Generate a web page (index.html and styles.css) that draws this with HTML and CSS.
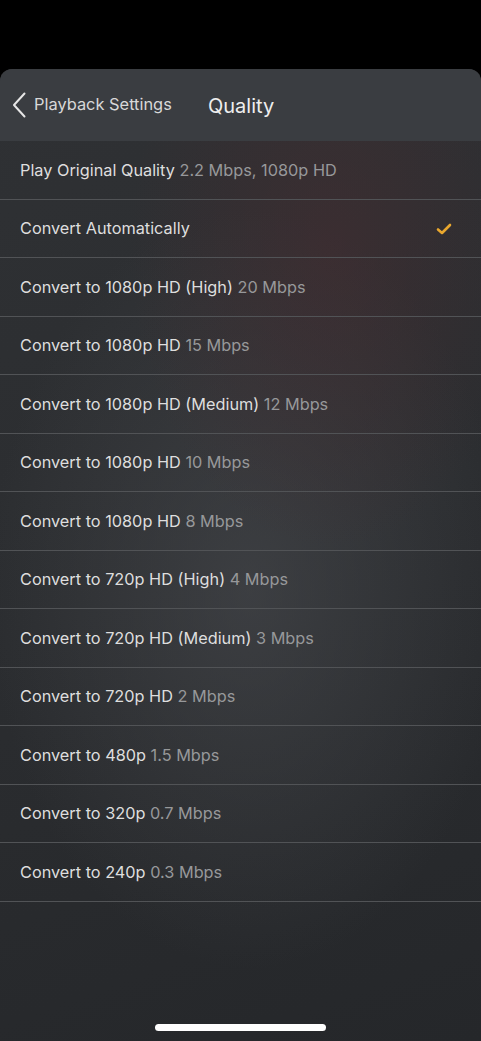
FILE: index.html
```html
<!DOCTYPE html>
<html lang="en">

<head>
    <meta charset="UTF-8">
    <meta name="viewport" content="width=device-width, initial-scale=1.0">
    <title>Quality</title>
    <link rel="stylesheet" href="styles.css">
</head>

<body>
    <div class="sheet">
        <div class="header">
            <div class="back">
                <svg class="chevron" width="14" height="26" viewBox="0 0 14 26">
                    <path d="M12.5 1.5 L2 13 L12.5 24.5" fill="none" stroke="#e6e6e6" stroke-width="2" stroke-linecap="round" stroke-linejoin="round"/>
                </svg>
                <span>Playback Settings</span>
            </div>
            <div class="title">Quality</div>
        </div>
        <ul class="list">
            <li><span class="name">Play Original Quality <span class="rate">2.2 Mbps, 1080p HD</span></span></li>
            <li class="selected"><span class="name">Convert Automatically</span>
                <svg class="check" width="16" height="12" viewBox="0 0 16 12">
                    <path d="M2 6.5 L6 10 L14 2" fill="none" stroke="#e9a72e" stroke-width="2.6" stroke-linecap="round" stroke-linejoin="round"/>
                </svg>
            </li>
            <li><span class="name">Convert to 1080p HD (High) <span class="rate">20 Mbps</span></span></li>
            <li><span class="name">Convert to 1080p HD <span class="rate">15 Mbps</span></span></li>
            <li><span class="name">Convert to 1080p HD (Medium) <span class="rate">12 Mbps</span></span></li>
            <li><span class="name">Convert to 1080p HD <span class="rate">10 Mbps</span></span></li>
            <li><span class="name">Convert to 1080p HD <span class="rate">8 Mbps</span></span></li>
            <li><span class="name">Convert to 720p HD (High) <span class="rate">4 Mbps</span></span></li>
            <li><span class="name">Convert to 720p HD (Medium) <span class="rate">3 Mbps</span></span></li>
            <li><span class="name">Convert to 720p HD <span class="rate">2 Mbps</span></span></li>
            <li><span class="name">Convert to 480p <span class="rate">1.5 Mbps</span></span></li>
            <li><span class="name">Convert to 320p <span class="rate">0.7 Mbps</span></span></li>
            <li><span class="name">Convert to 240p <span class="rate">0.3 Mbps</span></span></li>
        </ul>
        <div class="home-bar"></div>
    </div>
</body>

</html>
```

FILE: styles.css
```css
html,
body,
ul,
li {
    margin: 0;
    padding: 0;
}

body {
    background: #000;
    font-family: Inter, "Liberation Sans", sans-serif;
    height: 1041px;
    overflow: hidden;
}

.sheet {
    margin-top: 69px;
    height: 972px;
    border-radius: 12px 12px 0 0;
    overflow: hidden;
    display: flex;
    flex-direction: column;
    background:
        radial-gradient(ellipse 200px 300px at 330px 180px, rgba(70, 44, 48, 0.55), transparent),
        radial-gradient(ellipse 260px 380px at 250px 520px, rgba(72, 74, 78, 0.6), transparent),
        linear-gradient(160deg, #2f3134 0%, #2b2d30 50%, #25272a 100%);
}

.header {
    height: 72px;
    flex: none;
    background: #3a3d41;
    display: flex;
    align-items: center;
    color: #e8e8e8;
}

.back {
    display: flex;
    align-items: center;
    gap: 8px;
    padding-left: 12px;
    width: 196px;
    font-size: 16.4px;
    color: #d8d8d8;
    margin-top: -1px;
}

.back span {
    margin-top: -2px;
}

.title {
    font-size: 20px;
    color: #eeeeee;
    margin-top: 1px;
}

.list {
    list-style: none;
}

.list li {
    height: 57.5px;
    border-bottom: 1px solid #515356;
    display: flex;
    align-items: center;
    padding: 0 29px 0 20px;
    font-size: 16.3px;
    white-space: pre;
}

.name {
    color: #dedede;
}

.rate {
    color: #97989a;
}

.selected {
    justify-content: space-between;
}

.check {
    margin-top: 1px;
}

.home-bar {
    width: 171px;
    height: 7px;
    border-radius: 4px;
    background: #fff;
    margin: auto auto 10px;
}
```
